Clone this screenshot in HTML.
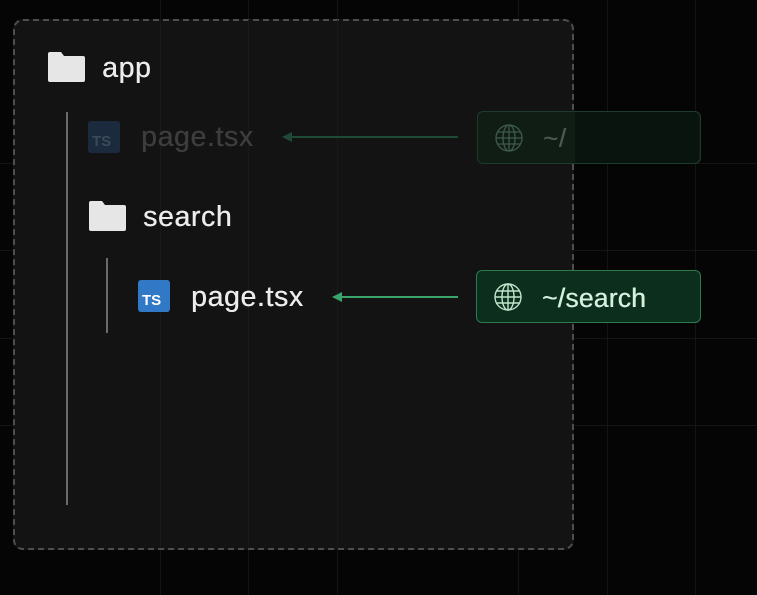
<!DOCTYPE html>
<html><head><style>
body{margin:0;width:757px;height:595px;background:#050505;position:relative;overflow:hidden;font-family:"Liberation Sans",sans-serif}
.a{position:absolute}
.vl{position:absolute;top:0;bottom:0;width:1px;background:#141414}
.hl{position:absolute;left:0;right:0;height:1px;background:#141414}
.box{position:absolute;left:13px;top:19px;width:557px;height:527px;background:#131313;border:2px dashed #4e4e4e;border-radius:10px}
.t{position:absolute;font-size:28.5px;line-height:30px;letter-spacing:0.6px;text-shadow:0.4px 0 0 currentColor}
.folder{position:absolute;width:37px;height:30px}
.ts{position:absolute;width:32px;height:32px;border-radius:3px;color:#fff;font-weight:bold;font-size:15px;box-sizing:border-box;padding:13px 0 0 4px;line-height:16px}
</style></head><body>
<div class="vl" style="left:160px"></div><div class="vl" style="left:248px"></div><div class="vl" style="left:337px"></div><div class="vl" style="left:518px"></div><div class="vl" style="left:607px"></div><div class="vl" style="left:695px"></div>
<div class="hl" style="top:163px"></div><div class="hl" style="top:250px"></div><div class="hl" style="top:338px"></div><div class="hl" style="top:425px"></div>
<div class="box"></div>
<div class="vl" style="left:160px;top:20px;bottom:48px;background:#191919"></div>
<div class="vl" style="left:248px;top:20px;bottom:48px;background:#191919"></div>
<div class="vl" style="left:337px;top:20px;bottom:48px;background:#191919"></div>
<div class="a" style="left:66px;top:112px;width:2px;height:393px;background:#6a6a6a"></div>
<div class="a" style="left:106px;top:258px;width:2px;height:75px;background:#6a6a6a"></div>
<svg class="folder" style="left:48px;top:52px" viewBox="0 0 37 30"><path d="M2 0h11l3 4h19a2 2 0 0 1 2 2v22a2 2 0 0 1-2 2H2a2 2 0 0 1-2-2V2a2 2 0 0 1 2-2z" fill="#e6e6e6"/></svg>
<div class="t" style="left:102px;top:53px;color:#ececec">app</div>
<div class="ts" style="left:88px;top:121px;background:#1b2a3c;color:#3b4a5a">TS</div>
<div class="t" style="left:141px;top:122px;color:#3d3d3d">page.tsx</div>
<svg class="folder" style="left:89px;top:201px;width:37px" viewBox="0 0 37 30"><path d="M2 0h11l3 4h19a2 2 0 0 1 2 2v22a2 2 0 0 1-2 2H2a2 2 0 0 1-2-2V2a2 2 0 0 1 2-2z" fill="#e6e6e6"/></svg>
<div class="t" style="left:143px;top:202px;color:#ececec">search</div>
<div class="ts" style="left:138px;top:280px;background:#3178c6">TS</div>
<div class="t" style="left:191px;top:282px;color:#ececec">page.tsx</div>
<svg class="a" style="left:280px;top:130px" width="180" height="14"><path d="M4 7H178" stroke="#1e4a36" stroke-width="2"/><path d="M2 7l10-5v10z" fill="#1e4a36"/></svg>
<svg class="a" style="left:330px;top:290px" width="130" height="14"><path d="M4 7H128" stroke="#3aa46a" stroke-width="2"/><path d="M2 7l10-5v10z" fill="#3aa46a"/></svg>
<div class="a" style="left:477px;top:111px;width:222px;height:51px;border:1px solid #1d3a2a;background:#0f1d15;border-radius:6px"></div>
<div class="a" style="left:575px;top:112px;width:124px;height:51px;background:#0a140e;border-radius:0 6px 6px 0"></div>
<svg class="a" style="left:494px;top:123px" width="30" height="30" viewBox="0 0 30 30" fill="none" stroke="#3f5a4a" stroke-width="1.3"><circle cx="15" cy="15" r="13"/><ellipse cx="15" cy="15" rx="6" ry="13"/><path d="M15 2v26M2 15h26M4 9h22M4 21h22"/></svg>
<div class="t" style="left:543px;top:123px;color:#4a5a50;font-size:26px">~/</div>
<div class="a" style="left:476px;top:270px;width:223px;height:51px;border:1px solid #2e7a4d;background:#0c2e1c;border-radius:6px"></div>
<svg class="a" style="left:493px;top:282px" width="30" height="30" viewBox="0 0 30 30" fill="none" stroke="#bfe6cc" stroke-width="1.4"><circle cx="15" cy="15" r="13"/><ellipse cx="15" cy="15" rx="6" ry="13"/><path d="M15 2v26M2 15h26M4 9h22M4 21h22"/></svg>
<div class="t" style="left:542px;top:283px;color:#d6f0de;font-size:26.5px;letter-spacing:0.2px">~/search</div>
</body></html>
